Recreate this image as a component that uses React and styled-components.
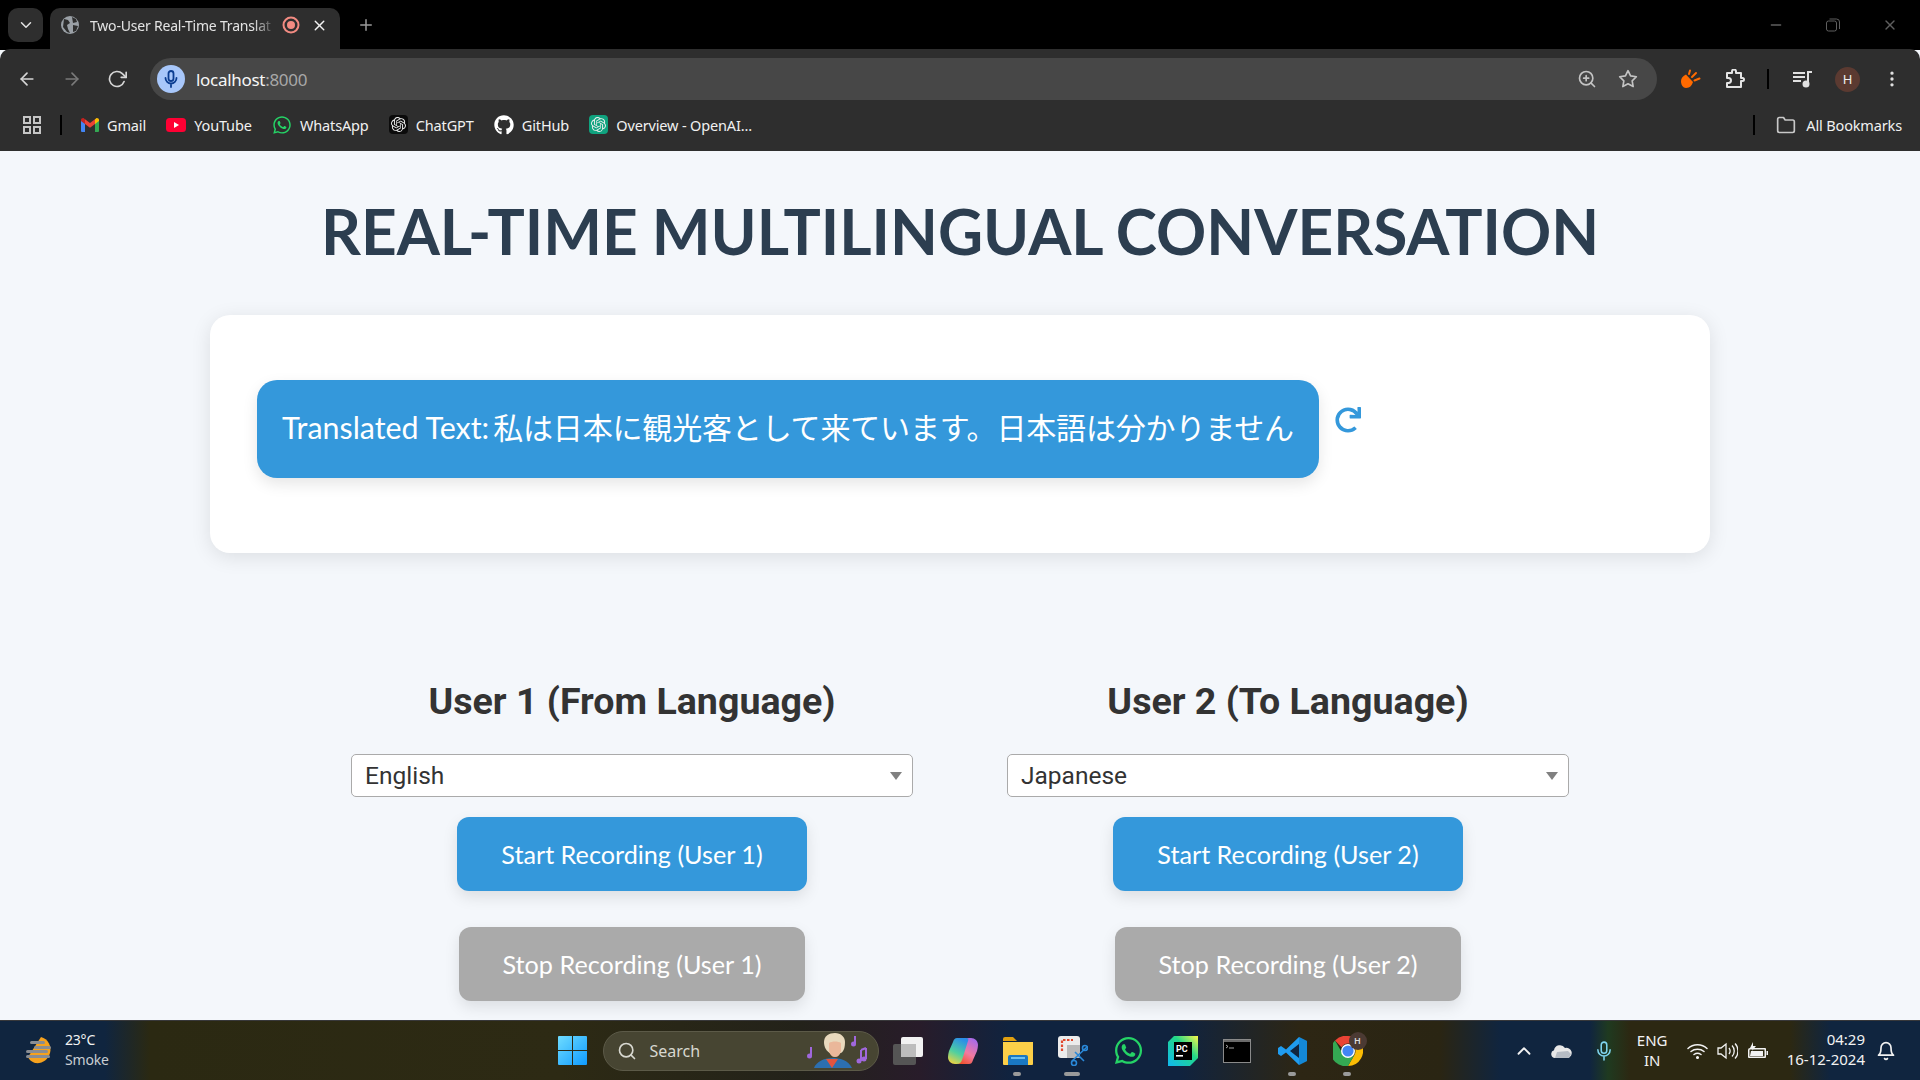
import React from 'react';
import styled, { createGlobalStyle } from 'styled-components';
import { FaRedo, FaWhatsapp, FaGithub } from 'react-icons/fa';
import { SiOpenai } from 'react-icons/si';
import { FiArrowLeft, FiArrowRight, FiRotateCw, FiMoreVertical, FiStar, FiZoomIn, FiX, FiPlus, FiMinus, FiChevronDown, FiChevronUp, FiSearch, FiBell, FiFolder } from 'react-icons/fi';

const uiFont = '"Noto Sans", "Open Sans", sans-serif';

const GlobalStyle = createGlobalStyle`
  html, body { margin: 0; padding: 0; height: 100%; overflow: hidden; background: #f4f7fb; }
  * { box-sizing: border-box; }
`;

const Screen = styled.div`
  width: 1920px;
  height: 1080px;
  display: flex;
  flex-direction: column;
  overflow: hidden;
`;

/* browser frame */
const TabStrip = styled.div`
  height: 50px;
  flex: none;
  background: #000;
  display: flex;
  align-items: flex-end;
  padding-left: 8px;
  font-family: ${uiFont};
`;
const TabSearch = styled.div`
  width: 35px;
  height: 34px;
  margin-bottom: 8px;
  border-radius: 10px;
  background: #2e2e2e;
  color: #e3e3e3;
  display: flex;
  align-items: center;
  justify-content: center;
  font-size: 18px;
`;
const Tab = styled.div`
  width: 290px;
  height: 42px;
  margin-left: 7px;
  border-radius: 10px 10px 0 0;
  background: #2e2e2e;
  display: flex;
  align-items: center;
  padding: 0 12px 8px 11px;
  color: #e3e3e3;
`;
const TabTitle = styled.span`
  width: 186px;
  margin-left: 11px;
  font-size: 14px;
  letter-spacing: -0.2px;
  white-space: nowrap;
  -webkit-mask-image: linear-gradient(90deg, #000 88%, transparent);
  mask-image: linear-gradient(90deg, #000 88%, transparent);
`;
const RecordMark = styled.svg`
  margin-left: 6px;
`;
const TabClose = styled.span`
  margin-left: auto;
  display: flex;
  font-size: 17px;
  color: #f2f2f2;
`;
const NewTab = styled.span`
  margin: 0 0 16px 17px;
  display: flex;
  font-size: 18px;
  color: #9a9a9a;
`;
const WindowControls = styled.div`
  margin: 0 22px 16px auto;
  display: flex;
  align-items: center;
  gap: 41px;
  color: #5f5f5f;
  font-size: 18px;
`;
const WindowBtn = styled.span`
  display: flex;
  width: 16px;
  justify-content: center;
`;
const Toolbar = styled.div`
  height: 51px;
  flex: none;
  margin-top: -1px;
  background: #2e2e2e;
  border-radius: 10px 10px 0 0;
  display: flex;
  align-items: flex-start;
  padding: 9px 0 0 17px;
  font-family: ${uiFont};
`;
const NavBtn = styled.span`
  width: 45px;
  height: 42px;
  display: flex;
  align-items: center;
  color: ${p => (p.$dim ? '#7a7a7a' : '#d6d6d6')};
  font-size: 20px;
`;
const Omnibox = styled.div`
  width: 1507px;
  height: 42px;
  margin-left: -2px;
  border-radius: 21px;
  background: #474747;
  display: flex;
  align-items: center;
  padding: 0 19px 0 7px;
`;
const MicCircle = styled.span`
  width: 28px;
  height: 28px;
  border-radius: 50%;
  background: #a8c7fa;
  display: flex;
  align-items: center;
  justify-content: center;
`;
const Url = styled.span`
  margin-left: 11px;
  font-size: 17px;
  letter-spacing: -0.3px;
  color: #f6f6f6;
`;
const UrlPort = styled.span`
  color: #a8a8a8;
`;
const OmniIcons = styled.span`
  margin-left: auto;
  display: flex;
  align-items: center;
  gap: 21px;
  color: #c4c4c4;
  font-size: 20px;
`;
const ToolIcons = styled.div`
  height: 42px;
  display: flex;
  align-items: center;
  margin-left: 23px;
  color: #e0e0e0;
`;
const ExtGap = styled.span`
  width: 24px;
`;
const ToolDivider = styled.span`
  width: 2px;
  height: 20px;
  background: #000;
  margin: 0 ${p => p.$after}px 0 ${p => p.$before}px;
`;
const Avatar = styled.span`
  width: 25px;
  height: 25px;
  border-radius: 50%;
  background: #5b3a31;
  color: #eee;
  font-size: 13px;
  display: flex;
  align-items: center;
  justify-content: center;
  margin: 0 22px 0 22px;
`;
const Kebab = styled.span`
  display: flex;
  font-size: 20px;
  color: #e0e0e0;
`;
const Bookmarks = styled.div`
  height: 51px;
  flex: none;
  background: #2e2e2e;
  display: flex;
  align-items: center;
  padding: 0 18px 2px 23px;
  font-family: ${uiFont};
`;
const AppsDivider = styled.span`
  width: 2px;
  height: 20px;
  background: #000;
  margin: 0 19px 0 19px;
`;
const Bookmark = styled.span`
  display: flex;
  align-items: center;
  gap: 8px;
  margin-right: 20.2px;
  color: #f1f1f1;
  font-size: 14.5px;
  letter-spacing: -0.15px;
  white-space: nowrap;
`;
const AllBookmarks = styled.span`
  margin-left: auto;
  display: flex;
  align-items: center;
  color: #f1f1f1;
  font-size: 14.5px;
  letter-spacing: -0.15px;
`;
const FolderIcon = styled.span`
  display: flex;
  font-size: 20px;
  color: #c8c8c8;
  margin: 0 10px 0 21px;
`;
const GptBadge = styled.span`
  width: 19px;
  height: 19px;
  border-radius: 4px;
  background: ${p => p.$bg};
  color: #eee;
  font-size: 15px;
  display: flex;
  align-items: center;
  justify-content: center;
`;

/* page */
const Page = styled.main`
  flex: 1;
  min-height: 0;
  overflow: hidden;
  background: #f4f7fb;
  display: flex;
  flex-direction: column;
  align-items: center;
  font-family: Lato, sans-serif;
`;
const Title = styled.h1`
  margin: 39px 0 0;
  height: 82px;
  line-height: 82px;
  font-size: 62.2px;
  word-spacing: -1px;
  font-weight: 700;
  color: #2c3e50;
  white-space: nowrap;
`;
const Card = styled.section`
  width: 1500px;
  height: 238px;
  margin-top: 43px;
  background: #fff;
  border-radius: 20px;
  box-shadow: 0 4px 20px rgba(0, 0, 0, 0.1);
  padding: 65px 47px 0;
  display: flex;
  align-items: flex-start;
  gap: 16px;
`;
const Bubble = styled.div`
  height: 98px;
  padding: 0 25px 6px;
  border-radius: 20px;
  background: #3498db;
  color: #fff;
  font-size: 30px;
  letter-spacing: -0.17px;
  font-family: Lato, "Noto Sans CJK JP", sans-serif;
  display: flex;
  align-items: center;
  white-space: nowrap;
  box-shadow: 0 6px 15px rgba(0, 0, 0, 0.1);
`;
const BubbleText = styled.span`
  word-spacing: -3.5px;
`;
const BubbleLabel = styled.span`
  font-size: 30.4px;
  letter-spacing: 0;
  word-spacing: 0;
`;
const RefreshBtn = styled.span`
  display: flex;
  margin-top: 27px;
  color: #3498db;
  font-size: 26px;
`;
const Users = styled.div`
  margin-top: 124px;
  display: grid;
  grid-template-columns: 562px 562px;
  column-gap: 94px;
`;
const UserCol = styled.div`
  display: flex;
  flex-direction: column;
  align-items: center;
`;
const UserHeading = styled.h2`
  margin: 0;
  height: 48px;
  line-height: 48px;
  font-family: Roboto, sans-serif;
  font-size: 37.6px;
  font-weight: 700;
  color: #333;
  white-space: nowrap;
`;
const SelectWrap = styled.div`
  position: relative;
  width: 100%;
  margin-top: 29px;
  &::after {
    content: '';
    position: absolute;
    right: 11px;
    top: 18px;
    border-left: 6px solid transparent;
    border-right: 6px solid transparent;
    border-top: 8px solid #808080;
    pointer-events: none;
  }
`;
const LangSelect = styled.select`
  appearance: none;
  width: 100%;
  height: 43px;
  padding: 0 13px;
  border: 1px solid #aaa;
  border-radius: 5px;
  background: #fff;
  font-family: Roboto, sans-serif;
  font-size: 24.5px;
  color: #333;
`;
const RecordButton = styled.button`
  height: 74px;
  margin-top: ${p => p.$top}px;
  padding: 0 44px;
  border: 0;
  border-radius: 12px;
  background: ${p => (p.$off ? '#aaa' : '#3498db')};
  color: #fff;
  font-family: Lato, sans-serif;
  font-size: 25.2px;
  white-space: nowrap;
  box-shadow: 0 6px 15px rgba(0, 0, 0, 0.1);
`;

/* windows taskbar */
const Taskbar = styled.footer`
  height: 60px;
  flex: none;
  display: grid;
  grid-template-columns: 1fr auto 1fr;
  align-items: center;
  border-top: 1px solid #38383a;
  font-family: ${uiFont};
  color: #f2f2f2;
  background: linear-gradient(90deg, #10253f 0, #10253f 105px, #2b2912 150px, #2d2a14 560px, #23221a 800px, #281c2a 920px, #10233f 1010px, #10233f 1180px, #2d2614 1300px, #2a2513 1440px, #10253f 1500px, #10253f 1590px, #1f3a20 1608px, #2c2812 1630px, #2c2812 1790px, #10253f 1830px);
`;
const Weather = styled.div`
  display: flex;
  align-items: center;
  gap: 10px;
  padding-left: 25px;
`;
const WeatherText = styled.div`
  display: flex;
  flex-direction: column;
  font-size: 14px;
  line-height: 20px;
  letter-spacing: -0.2px;
  margin-top: -2px;
`;
const WeatherSub = styled.span`
  color: #c9cdd2;
`;
const Center = styled.div`
  display: flex;
  align-items: center;
  margin-left: 24px;
`;
const StartBtn = styled.span`
  display: flex;
  margin-right: 16px;
`;
const SearchPill = styled.div`
  width: 276px;
  height: 40px;
  border-radius: 20px;
  border: 1px solid #5c5a48;
  background: #474532;
  display: flex;
  align-items: center;
  padding: 0 10px 0 13px;
  margin-right: 13px;
  color: #d8d8d0;
  font-size: 16px;
  overflow: hidden;
`;
const SearchIcon = styled.span`
  display: flex;
  font-size: 20px;
  margin-right: 13px;
`;
const Doodle = styled.span`
  display: flex;
  margin-left: auto;
`;
const TaskIcon = styled.span`
  position: relative;
  width: 55px;
  height: 56px;
  display: flex;
  align-items: center;
  justify-content: flex-start;
  padding-left: 1px;
  &::after {
    content: ${p => (p.$run ? "''" : 'none')};
    position: absolute;
    bottom: 3px;
    left: ${p => (p.$wide ? 7 : 11)}px;
    width: ${p => (p.$wide ? 16 : 8)}px;
    height: 4px;
    border-radius: 2px;
    background: #9a9a9a;
  }
`;
const Badge = styled.span`
  position: absolute;
  left: 17px;
  top: 9px;
  width: 18px;
  height: 18px;
  border-radius: 50%;
  background: #4b3a33;
  color: #ddd;
  font-size: 9px;
  font-weight: 600;
  display: flex;
  align-items: center;
  justify-content: center;
`;
const Tray = styled.div`
  display: flex;
  align-items: center;
  justify-content: flex-end;
  padding-right: 24px;
`;
const TrayIcon = styled.span`
  display: flex;
  margin-left: ${p => p.$gap}px;
  font-size: ${p => p.$size || 20}px;
`;
const Lang = styled.div`
  width: 40px;
  margin: -2px 0 0 20px;
  text-align: center;
  font-size: 15px;
  line-height: 20px;
`;
const Clock = styled.div`
  margin: -4px 0 0 19px;
  text-align: right;
  font-size: 15px;
  line-height: 20px;
`;

const GmailIcon = () => (
  <svg width="18" height="14" viewBox="0 0 18 14">
    <path d="M0 2v11a1 1 0 0 0 1 1h3V5z" fill="#4285f4" />
    <path d="M18 2v11a1 1 0 0 1-1 1h-3V5z" fill="#34a853" />
    <path d="M14 1.2V6l4-3V2c0-1.6-2-2.4-3-1.6z" fill="#fbbc04" />
    <path d="M4 6V1.2L9 5l5-3.8V6L9 9.8z" fill="#ea4335" />
    <path d="M0 2v1l4 3V1.2L3 .4C2 -.4 0 .4 0 2z" fill="#c5221f" />
  </svg>
);
const YoutubeIcon = () => (
  <svg width="20" height="14" viewBox="0 0 20 14">
    <rect width="20" height="14" rx="3.5" fill="#ff0033" />
    <path d="M8 4l5 3-5 3z" fill="#fff" />
  </svg>
);
const AppsIcon = () => (
  <svg width="18" height="18" viewBox="0 0 18 18" fill="none" stroke="#c6c6c6" strokeWidth="2">
    <rect x="1" y="1" width="6" height="6" />
    <rect x="11" y="1" width="6" height="6" />
    <rect x="1" y="11" width="6" height="6" />
    <rect x="11" y="11" width="6" height="6" />
  </svg>
);
const GlobeIcon = () => (
  <svg width="18" height="18" viewBox="0 0 18 18">
    <circle cx="9" cy="9" r="9" fill="#9aa0a6" />
    <path d="M3 3l4 1 2 3-3 2 1 4 2 4-3-1-4-5zM11 1l4 2 1 3-4 1zM12 9l5 1-2 5-3 1z" fill="#2e2e2e" />
  </svg>
);
const RecordDot = () => (
  <RecordMark width="18" height="18" viewBox="0 0 18 18">
    <circle cx="9" cy="9" r="7.5" fill="none" stroke="#f28b82" strokeWidth="2" />
    <circle cx="9" cy="9" r="4" fill="#f28b82" />
  </RecordMark>
);
const MicIcon = ({ color, w = 14, h = 18, sw = 1.8 }) => (
  <svg width={w} height={h} viewBox="0 0 14 18" fill="none" stroke={color} strokeWidth={sw} strokeLinecap="round">
    <rect x="4.5" y="1" width="5" height="10" rx="2.5" />
    <path d="M1.5 8a5.5 5.5 0 0 0 11 0M7 13.5V17" />
  </svg>
);
const FlameIcon = () => (
  <svg width="21" height="21" viewBox="0 0 21 21">
    <path d="M1 12c0-3 2-5 5-6.500l7 7.500c-1 3-3 6-7 6-3 0-5-3-5-7z" fill="#ff6a00" />
    <path d="M9 5l1-3.500M12 8l4-4M14.500 11.500l5-2" stroke="#ff6a00" strokeWidth="2" strokeLinecap="round" />
  </svg>
);
const PuzzleIcon = () => (
  <svg width="20" height="20" viewBox="0 0 20 20" fill="none" stroke="#e4e4e4" strokeWidth="2" strokeLinejoin="round">
    <path d="M2 4h5V2.500a2 2 0 0 1 4 0V4h5v5h1.500a1.500 1.500 0 0 1 0 3H16v6H2v-4h1.500a2.500 2.500 0 0 0 0-5H2z" />
  </svg>
);
const MediaIcon = () => (
  <svg width="20" height="18" viewBox="0 0 20 18" fill="#e0e0e0">
    <rect x="0" y="2" width="12" height="2" />
    <rect x="0" y="6" width="12" height="2" />
    <rect x="0" y="10" width="8" height="2" />
    <rect x="14" y="1" width="2" height="13" />
    <rect x="14" y="1" width="5" height="2" />
    <circle cx="13" cy="14" r="3.500" />
  </svg>
);
const WeatherIcon = () => (
  <svg width="30" height="30" viewBox="0 0 30 30">
    <path d="M16 1c7 2 11 9 9 16-2 7-8 11-15 10-3-1-6-3-7-6z" fill="#f6a21e" />
    <rect x="5" y="5" width="15" height="3" rx="1.500" fill="#8a8d92" />
    <rect x="9" y="10" width="17" height="3" rx="1.500" fill="#8a8d92" />
    <rect x="1" y="14" width="22" height="3" rx="1.500" fill="#8a8d92" />
    <rect x="1" y="19" width="24" height="3" rx="1.500" fill="#8a8d92" />
  </svg>
);
const WindowsLogo = () => (
  <svg width="29" height="29" viewBox="0 0 29 29">
    <defs>
      <linearGradient id="win" x1="0" y1="0" x2="1" y2="1">
        <stop offset="0" stopColor="#6fdcff" />
        <stop offset="1" stopColor="#0f9bff" />
      </linearGradient>
    </defs>
    <path d="M0 1a1 1 0 0 1 1-1h13v14H0zM15 0h13a1 1 0 0 1 1 1v13H15zM0 15h14v14H1a1 1 0 0 1-1-1zM15 15h14v13a1 1 0 0 1-1 1H15z" fill="url(#win)" />
  </svg>
);
const BeethovenDoodle = () => (
  <svg width="62" height="38" viewBox="0 0 62 38">
    <path d="M8 36c2-6 10-10 18-10s16 2 20 10z" fill="#2c6fb0" />
    <path d="M20 27l6 9 6-9z" fill="#e2543f" />
    <path d="M18 10c0-6 5-9 11-9s10 4 10 9c0 5-1 9-4 11l-10 1c-5-3-7-7-7-12z" fill="#e8d9bd" />
    <path d="M23 11c3-2 9-2 12 0v8c-1 4-3 6-6 6s-5-2-6-6z" fill="#eab79a" />
    <g fill="none" stroke="#a067dc" strokeWidth="2">
      <path d="M5 15v9M49 4v8M55 18v11M60 16v11M55 18l5-2" />
    </g>
    <g fill="#a067dc">
      <circle cx="3.500" cy="24" r="2.500" />
      <circle cx="47.500" cy="12" r="2.500" />
      <circle cx="53" cy="29" r="2.500" />
      <circle cx="58" cy="27" r="2.500" />
    </g>
  </svg>
);
const TaskViewIcon = () => (
  <svg width="30" height="30" viewBox="0 0 30 30">
    <rect x="0" y="8" width="23" height="21" rx="2" fill="#555" />
    <rect x="8" y="1" width="22" height="20" rx="2" fill="#f2f2f2" />
    <rect x="8" y="8" width="15" height="13" fill="#bdbdbd" />
  </svg>
);
const CopilotIcon = () => (
  <svg width="30" height="30" viewBox="0 0 30 30">
    <defs>
      <linearGradient id="cpA" x1="0.600" y1="0" x2="0.200" y2="1">
        <stop offset="0" stopColor="#2b8ee8" />
        <stop offset="0.55" stopColor="#4fd0a0" />
        <stop offset="1" stopColor="#f4d33e" />
      </linearGradient>
      <linearGradient id="cpB" x1="0.700" y1="0" x2="0.200" y2="1">
        <stop offset="0" stopColor="#a86be8" />
        <stop offset="0.55" stopColor="#f27aa0" />
        <stop offset="1" stopColor="#f0502a" />
      </linearGradient>
    </defs>
    <path d="M21 28h-9c-2 0-3-1-2-3L16 6c.6-2 2-4 5-4h2c4 0 7 3 7 7 0 2-.5 4-1 6l-4 9c-1 3-2 4-4 4z" fill="url(#cpB)" />
    <path d="M9 2h9c2 0 3 1 2 3l-6 19c-.6 2-2 4-5 4H7c-4 0-7-3-7-7 0-2 .5-4 1-6l4-9c1-3 2-4 4-4z" fill="url(#cpA)" />
  </svg>
);
const FilesIcon = () => (
  <svg width="30" height="28" viewBox="0 0 30 28">
    <path d="M0 2a2 2 0 0 1 2-2h8l4 4h-14z" fill="#e0a010" />
    <path d="M0 5h30v22a1 1 0 0 1-1 1H1a1 1 0 0 1-1-1z" fill="#fccf48" />
    <path d="M5 20a2 2 0 0 1 2-2h16a2 2 0 0 1 2 2v8H5z" fill="#1a78c2" />
    <rect x="8" y="20" width="14" height="2" fill="#6cc0f0" />
  </svg>
);
const SnipIcon = () => (
  <svg width="30" height="30" viewBox="0 0 30 30">
    <rect x="0" y="0" width="22" height="22" rx="3" fill="#ececec" />
    <path d="M4 15V4h11" fill="none" stroke="#e2492f" strokeWidth="2.200" strokeDasharray="2.500 1.500" />
    <rect x="9" y="9" width="13" height="13" fill="#b9b9b9" />
    <path d="M29 11L14 25M17 16l9 9" stroke="#2a88d8" strokeWidth="1.600" />
    <circle cx="27" cy="12" r="2.500" fill="none" stroke="#2a88d8" strokeWidth="1.600" />
    <circle cx="16" cy="27" r="2.500" fill="none" stroke="#2a88d8" strokeWidth="1.600" />
  </svg>
);
const PyCharmIcon = () => (
  <svg width="30" height="30" viewBox="0 0 30 30">
    <defs>
      <linearGradient id="pc" x1="0" y1="1" x2="1" y2="0">
        <stop offset="0" stopColor="#10b8f0" />
        <stop offset="0.6" stopColor="#21d789" />
        <stop offset="1" stopColor="#fcf84a" />
      </linearGradient>
    </defs>
    <path d="M0 6l6-6h24v22l-8 8H0z" fill="url(#pc)" />
    <rect x="6" y="6" width="18" height="18" fill="#000" />
    <text x="8" y="16" fontSize="9" fontWeight="700" fill="#fff" fontFamily="Roboto, sans-serif">PC</text>
    <rect x="8" y="19" width="7" height="1.600" fill="#fff" />
  </svg>
);
const TerminalIcon = () => (
  <svg width="28" height="24" viewBox="0 0 28 24">
    <rect x="0.500" y="0.500" width="27" height="23" fill="#000" stroke="#8a8a8a" />
    <rect x="1" y="1" width="26" height="2" fill="#6a6a6a" />
    <path d="M3 6l2 1.500-2 1.500M6 9h5" stroke="#ccc" strokeWidth="0.800" fill="none" />
  </svg>
);
const VscodeIcon = () => (
  <svg width="30" height="30" viewBox="0 0 30 30">
    <path d="M21 1l8 4v20l-8 4-13-12.500L3 20l-3-2v-6l3-2 5 3.500z" fill="#1f9cf0" />
    <path d="M21 8L12 15l9 7z" fill="#10243f" />
    <path d="M21 1l8 4v20l-8 4z" fill="#0065a9" opacity="0.35" />
  </svg>
);
const ChromeIcon = () => (
  <svg width="30" height="30" viewBox="0 0 30 30">
    <path d="M15 0a15 15 0 0 1 13 7.500H15a7.500 7.500 0 0 0-6.500 3.800L2 4.500A15 15 0 0 1 15 0z" fill="#ea4335" />
    <path d="M28 7.500a15 15 0 0 1-13 22.500l6.500-11.200A7.500 7.500 0 0 0 22.500 15c0-2.900-.8-5.500-3-7.500z" fill="#fbbc04" />
    <path d="M2 4.500l6.500 11.300a7.500 7.500 0 0 0 13 3L15 30A15 15 0 0 1 2 4.500z" fill="#34a853" />
    <circle cx="15" cy="15" r="7" fill="#fff" />
    <circle cx="15" cy="15" r="5.600" fill="#4285f4" />
  </svg>
);
const CloudIcon = () => (
  <svg width="21" height="14" viewBox="0 0 21 14">
    <path d="M4 14a4 4 0 0 1-1-7.800A6 6 0 0 1 14 4a4.500 4.500 0 0 1 3 10z" fill="#e8e8e8" />
    <path d="M6 8l11-1 3 3-2 4H4z" fill="#b6bcc4" />
  </svg>
);
const WifiIcon = () => (
  <svg width="21" height="16" viewBox="0 0 21 16" fill="none" stroke="#f2f2f2" strokeWidth="1.500" strokeLinecap="round">
    <path d="M1 5.500c5-5 14-5 19 0M4 8.500c3.500-3 9.500-3 13 0M7 11.500c2-1.500 5-1.500 7 0" />
    <circle cx="10.500" cy="14.500" r="0.800" fill="#f2f2f2" />
  </svg>
);
const SpeakerIcon = () => (
  <svg width="21" height="18" viewBox="0 0 21 18" fill="none" stroke="#f2f2f2" strokeWidth="1.300">
    <path d="M1 6h3l5-4v14l-5-4H1z" />
    <path d="M12 6c1.500 2 1.500 4 0 6M15 3.500c3 3 3 8 0 11M18 1.500c4 4 4 11 0 15" />
  </svg>
);
const BatteryIcon = () => (
  <svg width="21" height="18" viewBox="0 0 21 18" fill="#f2f2f2">
    <path d="M3 6h15a1 1 0 0 1 1 1v8a1 1 0 0 1-1 1H2a1 1 0 0 1-1-1V8a2 2 0 0 1 2-2zm0 1.500a.5.5 0 0 0-.5.5v6.500h15v-7z" />
    <path d="M4 9h12v5H3z" />
    <rect x="19.500" y="9" width="1.500" height="4" />
    <path d="M6 0L3 6h3L5 9l4-5H6z" />
  </svg>
);

const bookmarks = [
  { name: 'Gmail', icon: <GmailIcon /> },
  { name: 'YouTube', icon: <YoutubeIcon /> },
  { name: 'WhatsApp', icon: <FaWhatsapp size={20} color="#25d366" /> },
  { name: 'ChatGPT', icon: <GptBadge $bg="#0b0b0b"><SiOpenai /></GptBadge> },
  { name: 'GitHub', icon: <FaGithub size={20} color="#fff" /> },
  { name: 'Overview - OpenAI...', icon: <GptBadge $bg="#10a37f"><SiOpenai /></GptBadge> },
];

const taskIcons = [
  { key: 'view', icon: <TaskViewIcon /> },
  { key: 'copilot', icon: <CopilotIcon /> },
  { key: 'files', icon: <FilesIcon />, run: true },
  { key: 'snip', icon: <SnipIcon />, run: true, wide: true },
  { key: 'wa', icon: <FaWhatsapp size={31} color="#25d366" /> },
  { key: 'pc', icon: <PyCharmIcon /> },
  { key: 'term', icon: <TerminalIcon /> },
  { key: 'code', icon: <VscodeIcon />, run: true },
  { key: 'chrome', icon: <ChromeIcon />, run: true, badge: 'H' },
];

const users = [
  { id: 1, label: 'User 1 (From Language)', lang: 'English' },
  { id: 2, label: 'User 2 (To Language)', lang: 'Japanese' },
];

function BrowserFrame() {
  return (
    <>
      <TabStrip>
        <TabSearch><FiChevronDown /></TabSearch>
        <Tab>
          <GlobeIcon />
          <TabTitle>Two-User Real-Time Translat</TabTitle>
          <RecordDot />
          <TabClose><FiX /></TabClose>
        </Tab>
        <NewTab><FiPlus /></NewTab>
        <WindowControls>
          <WindowBtn><FiMinus /></WindowBtn>
          <WindowBtn>
            <svg width="14" height="14" viewBox="0 0 14 14" fill="none" stroke="currentColor">
              <rect x="0.500" y="3" width="10" height="10" rx="2" />
              <path d="M3.500 1h7a3 3 0 0 1 3 3v7" />
            </svg>
          </WindowBtn>
          <WindowBtn><FiX /></WindowBtn>
        </WindowControls>
      </TabStrip>
      <Toolbar>
        <NavBtn><FiArrowLeft /></NavBtn>
        <NavBtn $dim><FiArrowRight /></NavBtn>
        <NavBtn><FiRotateCw /></NavBtn>
        <Omnibox>
          <MicCircle><MicIcon color="#0b3d91" /></MicCircle>
          <Url>localhost<UrlPort>:8000</UrlPort></Url>
          <OmniIcons><FiZoomIn /><FiStar /></OmniIcons>
        </Omnibox>
        <ToolIcons>
          <FlameIcon />
          <ExtGap />
          <PuzzleIcon />
          <ToolDivider $before={22} $after={24} />
          <MediaIcon />
          <Avatar>H</Avatar>
          <Kebab><FiMoreVertical /></Kebab>
        </ToolIcons>
      </Toolbar>
      <Bookmarks>
        <AppsIcon />
        <AppsDivider />
        {bookmarks.map(b => (
          <Bookmark key={b.name}>{b.icon}{b.name}</Bookmark>
        ))}
        <AllBookmarks>
          <ToolDivider $before={0} $after={0} />
          <FolderIcon><FiFolder /></FolderIcon>
          All Bookmarks
        </AllBookmarks>
      </Bookmarks>
    </>
  );
}

function WinTaskbar() {
  return (
    <Taskbar>
      <Weather>
        <WeatherIcon />
        <WeatherText>
          <span>23°C</span>
          <WeatherSub>Smoke</WeatherSub>
        </WeatherText>
      </Weather>
      <Center>
        <StartBtn><WindowsLogo /></StartBtn>
        <SearchPill>
          <SearchIcon><FiSearch /></SearchIcon>
          Search
          <Doodle><BeethovenDoodle /></Doodle>
        </SearchPill>
        {taskIcons.map(t => (
          <TaskIcon key={t.key} $run={t.run} $wide={t.wide}>
            {t.icon}
            {t.badge && <Badge>{t.badge}</Badge>}
          </TaskIcon>
        ))}
      </Center>
      <Tray>
        <TrayIcon $size={22}><FiChevronUp /></TrayIcon>
        <TrayIcon $gap={16}><CloudIcon /></TrayIcon>
        <TrayIcon $gap={24}><MicIcon color="#7fd4ee" w={16} h={20} sw={1.4} /></TrayIcon>
        <Lang>ENG<br />IN</Lang>
        <TrayIcon $gap={14.5}><WifiIcon /></TrayIcon>
        <TrayIcon $gap={9}><SpeakerIcon /></TrayIcon>
        <TrayIcon $gap={9}><BatteryIcon /></TrayIcon>
        <Clock>04:29<br />16-12-2024</Clock>
        <TrayIcon $gap={11} $size={20}><FiBell /></TrayIcon>
      </Tray>
    </Taskbar>
  );
}

export default function App() {
  return (
    <>
      <GlobalStyle />
      <Screen>
        <BrowserFrame />
        <Page>
          <Title>REAL-TIME MULTILINGUAL CONVERSATION</Title>
          <Card>
            <Bubble>
              <BubbleText><BubbleLabel>Translated Text:</BubbleLabel> 私は日本に観光客として来ています。日本語は分かりません</BubbleText>
            </Bubble>
            <RefreshBtn><FaRedo /></RefreshBtn>
          </Card>
          <Users>
            {users.map(u => (
              <UserCol key={u.id}>
                <UserHeading>{u.label}</UserHeading>
                <SelectWrap>
                  <LangSelect defaultValue={u.lang}>
                    <option>{u.lang}</option>
                  </LangSelect>
                </SelectWrap>
                <RecordButton $top={20}>Start Recording (User {u.id})</RecordButton>
                <RecordButton $top={36} $off>Stop Recording (User {u.id})</RecordButton>
              </UserCol>
            ))}
          </Users>
        </Page>
        <WinTaskbar />
      </Screen>
    </>
  );
}
